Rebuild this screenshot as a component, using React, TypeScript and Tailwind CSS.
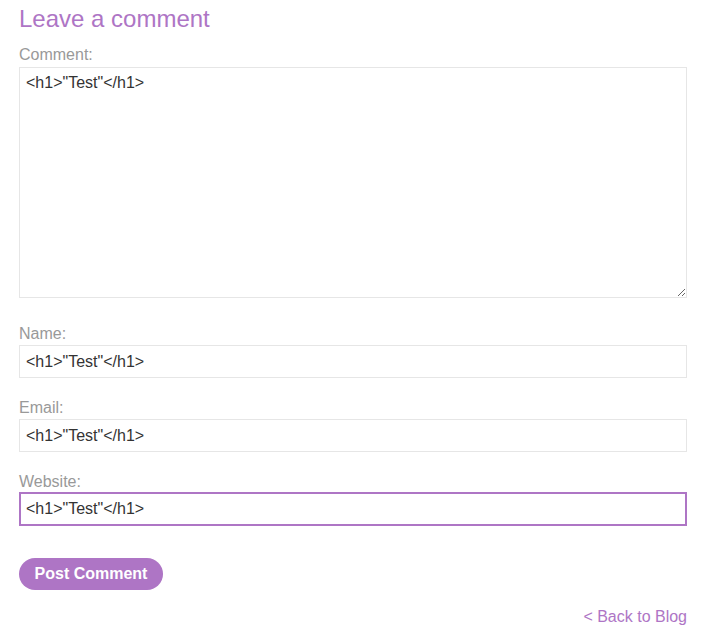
export default function App() {
  const value = '<h1>"Test"</h1>';
  const purple = "#ae75c5";

  return (
    <main
      className="min-h-screen bg-white"
      style={{ fontFamily: '"Liberation Sans", Arial, sans-serif' }}
    >
      <div className="ml-[19px] w-[668px] pt-[4px]">
        <h1 className="text-[24px] leading-[29px] font-normal text-[#ae75c5]">
          Leave a comment
        </h1>

        <form className="flex flex-col" onSubmit={(e) => e.preventDefault()}>
          <label className="mt-[13px] text-[16px] leading-[18px] text-[#999999]">
            Comment:
          </label>
          <textarea
            defaultValue={value}
            className="mt-[3px] h-[231px] w-full border border-[#e6e6e6] px-[6px] py-[6px] text-[16px] leading-[18px] text-[#333333] outline-none"
          />

          <label className="mt-[27px] text-[16px] leading-[18px] text-[#999999]">
            Name:
          </label>
          <input
            defaultValue={value}
            className="mt-[2px] h-[33px] w-full border border-[#e6e6e6] px-[6px] text-[16px] text-[#333333] outline-none"
          />

          <label className="mt-[21px] text-[16px] leading-[18px] text-[#999999]">
            Email:
          </label>
          <input
            defaultValue={value}
            className="mt-[2px] h-[33px] w-full border border-[#e6e6e6] px-[6px] text-[16px] text-[#333333] outline-none"
          />

          <label className="mt-[21px] text-[16px] leading-[18px] text-[#999999]">
            Website:
          </label>
          <input
            defaultValue={value}
            className="mt-[1px] h-[34px] w-full border-2 border-[#ae75c5] px-[5px] text-[16px] text-[#333333] outline-none"
          />

          <div className="mt-[32px]">
            <button
              type="submit"
              className="h-[32px] w-[144px] rounded-full text-[16px] font-bold text-white"
              style={{ backgroundColor: purple }}
            >
              Post Comment
            </button>
          </div>
        </form>

        <div className="mt-[15px] text-right">
          <a href="#" className="text-[16px] leading-[18px] text-[#ae75c5]">
            &lt; Back to Blog
          </a>
        </div>
      </div>
    </main>
  );
}
